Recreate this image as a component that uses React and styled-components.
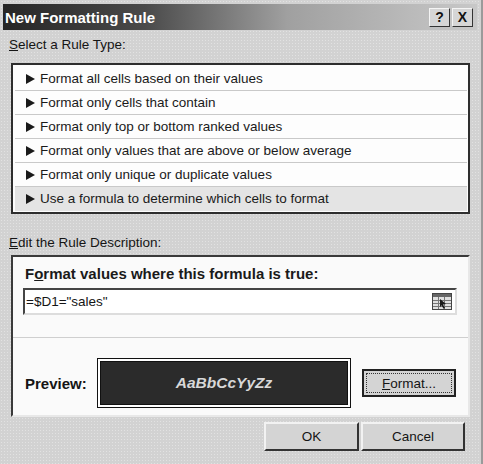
import React from 'react'
import styled, { createGlobalStyle } from 'styled-components'

const Global = createGlobalStyle`
    body {
        margin: 0;
        background: #d4d4d4;
        font-family: "Liberation Sans", Arial, sans-serif;
    }
`

const rules = [
    'Format all cells based on their values',
    'Format only cells that contain',
    'Format only top or bottom ranked values',
    'Format only values that are above or below average',
    'Format only unique or duplicate values',
    'Use a formula to determine which cells to format',
]

const FormulaIcon = () => (
    <svg width="20" height="17" viewBox="0 0 20 17">
        <rect x="0.5" y="0.5" width="19" height="16" fill="#e0e0e0" stroke="#444" />
        <rect x="1" y="1" width="18" height="3" fill="#666" />
        <path d="M1 7.5h18M1 10.5h18M1 13.5h18M6.5 4v12M12.5 4v12" stroke="#777" strokeWidth="1" />
        <path d="M8 6l6 5-3 0.5 2 3.5-1.5 0.8-2-3.5-1.5 2z" fill="#1a1a1a" />
    </svg>
)

const Triangle = () => (
    <svg width="9" height="10" viewBox="0 0 9 10">
        <polygon points="0,0 9,5 0,10" fill="#1a1a1a" />
    </svg>
)

const App = () => {
    return (
        <Window>
            <Global />
            <TitleBar>
                <Title>New Formatting Rule</Title>
                <Caps>
                    <CapButton>?</CapButton>
                    <CapButton>X</CapButton>
                </Caps>
            </TitleBar>

            <Body>
                <Label><u>S</u>elect a Rule Type:</Label>
                <ListBox>
                    {rules.map((r, i) => (
                        <Row key={r} selected={i === rules.length - 1}>
                            <Triangle />
                            <RowText>{r}</RowText>
                        </Row>
                    ))}
                </ListBox>

                <Label style={{ marginTop: 19 }}><u>E</u>dit the Rule Description:</Label>
                <Panel>
                    <Heading>F<u>o</u>rmat values where this formula is true:</Heading>
                    <FormulaBox>
                        <span>=$D1="sales"</span>
                        <FormulaIcon />
                    </FormulaBox>
                    <Separator />
                    <PreviewRow>
                        <PreviewLabel>Preview:</PreviewLabel>
                        <PreviewBox>
                            <PreviewText>AaBbCcYyZz</PreviewText>
                        </PreviewBox>
                        <FormatButton>
                            <Focus><u>F</u>ormat...</Focus>
                        </FormatButton>
                    </PreviewRow>
                </Panel>

                <Buttons>
                    <Button width={95}>OK</Button>
                    <Button width={104}>Cancel</Button>
                </Buttons>
            </Body>
        </Window>
    )
}

const Window = styled.div`
    width: 483px;
    height: 464px;
    box-sizing: border-box;
    padding: 4px 4px 0 3px;
    background: #d2d2d2;
    background-image: radial-gradient(#e2e2e2 0.6px, transparent 0.7px);
    background-size: 3px 3px;
    border-right: 2px solid #9a9a9a;
    display: flex;
    flex-direction: column;
    color: #151515;
    font-size: 13.5px;
`
const TitleBar = styled.div`
    height: 26px;
    display: flex;
    align-items: center;
    justify-content: space-between;
    padding: 0 4px 0 2px;
    background: linear-gradient(to right, #262626 0%, #4a4a4a 30%, #a0a0a0 60%, #c8c8c8 100%);
`
const Title = styled.div`
    color: #fff;
    font-weight: bold;
    font-size: 15px;
`
const Caps = styled.div`
    display: flex;
    gap: 2px;
`
const CapButton = styled.div`
    width: 21px;
    height: 19px;
    box-sizing: border-box;
    display: flex;
    align-items: center;
    justify-content: center;
    background: #d6d6d6;
    border: 1px solid;
    border-color: #f4f4f4 #333 #333 #f4f4f4;
    font-weight: bold;
    font-size: 14px;
    color: #111;
`
const Body = styled.div`
    display: flex;
    flex-direction: column;
    padding: 0 6px 0 8px;
`
const Label = styled.div`
    height: 20px;
    line-height: 20px;
    margin-top: 5px;
    margin-left: -2px;
    u { text-decoration-thickness: 1px; }
`
const ListBox = styled.div`
    margin-top: 8px;
    width: 459px;
    box-sizing: border-box;
    background: #fdfdfd;
    border: 2px solid #2e2e2e;
    padding: 2px 1px 1px 2px;
`
const Row = styled.div`
    height: 24px;
    display: flex;
    align-items: center;
    gap: 5px;
    padding-left: 11px;
    box-sizing: border-box;
    border-bottom: 1px solid ${p => (p.selected ? 'transparent' : '#c9c9c9')};
    background: ${p => (p.selected ? '#e4e4e4' : 'transparent')};
`
const RowText = styled.span`
    color: #1a1a1a;
`
const Panel = styled.div`
    margin-top: 2px;
    width: 459px;
    height: 162px;
    box-sizing: border-box;
    background: #fafafa;
    border: 2px solid;
    border-color: #3a3a3a #e8e8e8 #e8e8e8 #3a3a3a;
    display: flex;
    flex-direction: column;
`
const Heading = styled.div`
    font-weight: bold;
    font-size: 15px;
    line-height: 20px;
    margin: 7px 0 0 12px;
    color: #1a1a1a;
`
const FormulaBox = styled.div`
    margin: 4px 0 0 10px;
    width: 434px;
    height: 27px;
    box-sizing: border-box;
    border: 2px solid;
    border-color: #444 #ddd #ddd #444;
    background: #fff;
    display: flex;
    align-items: center;
    justify-content: space-between;
    padding: 0 3px 0 1px;
`
const Separator = styled.div`
    margin-top: 22px;
    height: 1px;
    background: #cfcfcf;
`
const PreviewRow = styled.div`
    display: flex;
    align-items: center;
    margin-top: 20px;
    padding-left: 12px;
`
const PreviewLabel = styled.div`
    width: 72px;
    font-weight: bold;
    font-size: 15px;
`
const PreviewBox = styled.div`
    width: 254px;
    height: 50px;
    box-sizing: border-box;
    border: 1px solid #111;
    padding: 2px;
    background: #fff;
`
const PreviewText = styled.div`
    height: 100%;
    background: #2b2b2b;
    border: 1px solid #111;
    box-sizing: border-box;
    display: flex;
    align-items: center;
    justify-content: center;
    color: #d8d8d8;
    font-weight: bold;
    font-style: italic;
    font-size: 15.5px;
`
const FormatButton = styled.div`
    margin-left: 11px;
    width: 94px;
    height: 28px;
    box-sizing: border-box;
    border: 2px solid #222;
    background: #d4d4d4;
    padding: 2px;
`
const Focus = styled.div`
    height: 100%;
    box-sizing: border-box;
    border: 1px dotted #333;
    display: flex;
    align-items: center;
    justify-content: center;
`
const Buttons = styled.div`
    display: flex;
    justify-content: flex-end;
    gap: 2px;
    margin-top: 5px;
    padding-right: 6px;
`
const Button = styled.div`
    width: ${p => p.width}px;
    height: 29px;
    box-sizing: border-box;
    display: flex;
    align-items: center;
    justify-content: center;
    border: 2px solid;
    border-color: #f2f2f2 #333 #333 #f2f2f2;
    background: #d4d4d4;
`

export default App
